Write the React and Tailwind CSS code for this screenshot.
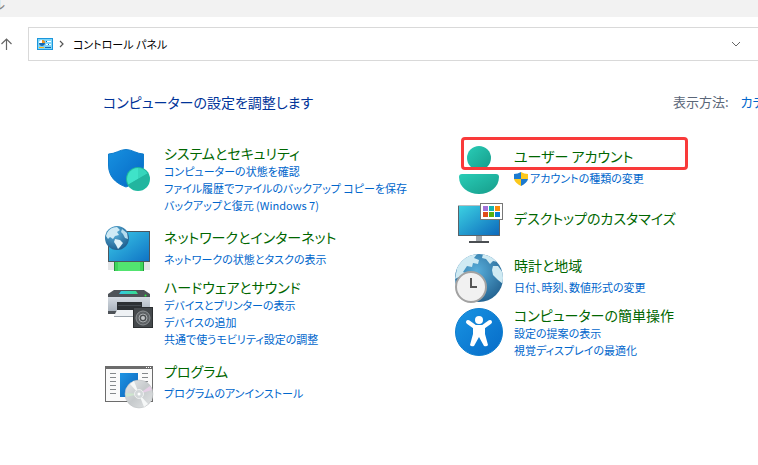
// App.jsx
import React from 'react';

const ShieldIcon = () => (
    <svg viewBox="0 0 48 44" className="w-12 h-11 shrink-0 overflow-visible" aria-hidden="true">
        <defs>
            <linearGradient id="shield" x1="0" y1="0" x2="1" y2="1">
                <stop offset="0" stopColor="#1791e0" />
                <stop offset="1" stopColor="#0567c4" />
            </linearGradient>
        </defs>
        <path
            d="M3.500 11C10 11 15 6.500 21 6.500S32 11 38.500 11V22C38.500 33 32 40 21 44C10 40 3.500 33 3.500 22Z"
            fill="url(#shield)"
            stroke="#0f7ccc"
        />
        <circle cx="33" cy="36" r="12" fill="#1fb89f" />
        <path d="M33 36V25A11 11 0 0 0 23.5 41.5Z" fill="#3fe3c9" />
        <path d="M33 36V25A11 11 0 0 1 42.5 30.5Z" fill="#35d6bc" />
        <path d="M33 36L42.5 30.5A11 11 0 0 1 23.5 41.5Z" fill="#22b59f" />
    </svg>
);

const NetworkIcon = () => (
    <svg viewBox="0 0 48 44" className="w-12 h-11 shrink-0 overflow-visible" aria-hidden="true">
        <defs>
            <linearGradient id="netScreen" x1="0" y1="0" x2="1" y2="1">
                <stop offset="0" stopColor="#3ccbe8" />
                <stop offset="1" stopColor="#0f72c4" />
            </linearGradient>
            <radialGradient id="netGlobe" cx="0.4" cy="0.3" r="0.75">
                <stop offset="0" stopColor="#5cb2dc" />
                <stop offset="1" stopColor="#1c5c8c" />
            </radialGradient>
        </defs>
        <rect x="3.5" y="4.5" width="41" height="30" fill="url(#netScreen)" stroke="#4c565e" />
        <rect x="3" y="35" width="42" height="8" fill="#e3e5e7" />
        <rect x="9" y="35" width="30" height="9" rx="1" fill="#3fd65c" />
        <rect x="13" y="35" width="22" height="9" fill="#52e470" />
        <path d="M9.500 35v9M38.500 35v9" stroke="#22963a" />
        <circle cx="12" cy="11" r="12" fill="url(#netGlobe)" />
        <path d="M2 6Q5 0 12 0L15 3L12 5L14 8L10 9L8 12L5 10L3 12L1 9Z" fill="#cfeaf5" />
        <path d="M10 12L15 13L18 16L15 20L13 22L11 18L9 15Z" fill="#dff1f8" />
        <path d="M17 2L22 6L23 12L20 11L18 7L16 5Z" fill="#b5dced" />
    </svg>
);

const HardwareIcon = () => (
    <svg viewBox="0 0 48 44" className="w-12 h-11 shrink-0 overflow-visible" aria-hidden="true">
        <defs>
            <linearGradient id="printerGlass" x1="0" y1="0" x2="1" y2="0">
                <stop offset="0" stopColor="#31c8e8" />
                <stop offset="1" stopColor="#38dd88" />
            </linearGradient>
            <linearGradient id="printerBody" x1="0" y1="0" x2="0" y2="1">
                <stop offset="0" stopColor="#d5dbe2" />
                <stop offset="1" stopColor="#aab3bd" />
            </linearGradient>
        </defs>
        <path d="M9 13H39L45 17V20H3V17Z" fill="#4e5358" />
        <path d="M16 14H31L33 17H14Z" fill="url(#printerGlass)" />
        <rect x="3" y="20" width="42" height="14" fill="url(#printerBody)" />
        <path d="M3 34H12V37H3Z" fill="#4e5358" />
        <path d="M12 25H37V33H12Z" fill="#2c3033" />
        <path d="M13 28.500H36" stroke="#454b50" />
        <path d="M12 33H36L38 39H9Z" fill="#eef1f4" />
        <path d="M9 39.500H30" stroke="#9aa2aa" />
        <circle cx="40.500" cy="18.500" r="1" fill="#2cf23c" />
        <rect x="28.500" y="30.500" width="19" height="20" fill="#45494c" stroke="#2b2e30" />
        <circle cx="38" cy="41" r="7" fill="#5e6265" stroke="#8d9194" />
        <circle cx="38" cy="41" r="4" fill="#4a4e51" stroke="#a9adaf" />
        <circle cx="38" cy="41" r="2" fill="#c2c5c7" />
    </svg>
);

const ProgramsIcon = () => (
    <svg viewBox="0 0 48 44" className="w-12 h-11 shrink-0 overflow-visible" aria-hidden="true">
        <defs>
            <linearGradient id="programBox" x1="0" y1="0" x2="1" y2="1">
                <stop offset="0" stopColor="#1c94e4" />
                <stop offset="1" stopColor="#0c62b8" />
            </linearGradient>
            <linearGradient id="disc" x1="0" y1="0" x2="1" y2="1">
                <stop offset="0" stopColor="#e8eaeb" />
                <stop offset="0.5" stopColor="#c6cacc" />
                <stop offset="1" stopColor="#e4e6e7" />
            </linearGradient>
        </defs>
        <rect x="0.500" y="5.500" width="47" height="35" fill="#fafafa" stroke="#6c6c6c" />
        <rect x="0" y="5" width="48" height="3" fill="#6c6c6c" />
        <path d="M41 6.500h1M43 6.500h1M45 6.500h1" stroke="#ffffff" />
        <path
            d="M5 12.500h6M5 16.500h6M5 20.500h6M5 24.500h6M5 28.500h6M5 32.500h6M37 12.500h6M37 16.500h6M37 20.500h6"
            stroke="#85898c"
        />
        <rect x="15" y="12" width="18" height="24" fill="url(#programBox)" />
        <circle cx="34" cy="33" r="14" fill="url(#disc)" stroke="#b9bdbf" strokeWidth="0.500" />
        <path d="M34 33L25 23L29 20Z" fill="#f6f8f8" />
        <path d="M34 33L43 43L39 46Z" fill="#f6f8f8" />
        <path d="M34 33L45 25L47 29Z" fill="#e6cfe6" />
        <path d="M34 33L21 36L21 32Z" fill="#cfe6cf" />
        <circle cx="34" cy="33" r="4.500" fill="#d3d7d9" stroke="#eef0f0" />
        <circle cx="34" cy="33" r="1.500" fill="#ffffff" />
    </svg>
);

const UserIcon = () => (
    <svg viewBox="0 0 48 44" className="w-12 h-11 shrink-0 overflow-visible" aria-hidden="true">
        <defs>
            <linearGradient id="user" x1="0" y1="0" x2="1" y2="1">
                <stop offset="0" stopColor="#29cdb7" />
                <stop offset="1" stopColor="#169c8a" />
            </linearGradient>
        </defs>
        <circle cx="24" cy="12" r="12" fill="url(#user)" />
        <path d="M7 28H41Q44 28 44 31C44 41 35 48 24 48S4 41 4 31Q4 28 7 28Z" fill="url(#user)" />
    </svg>
);

const DesktopIcon = () => (
    <svg viewBox="0 0 48 44" className="w-12 h-11 shrink-0 overflow-visible" aria-hidden="true">
        <defs>
            <linearGradient id="desktop" x1="0" y1="0" x2="1" y2="1">
                <stop offset="0" stopColor="#3cd2e2" />
                <stop offset="1" stopColor="#0c68bc" />
            </linearGradient>
        </defs>
        <rect x="21" y="27" width="6" height="6" fill="#a4a9ad" />
        <rect x="14" y="33" width="20" height="2" fill="#4a4e52" />
        <rect x="3.500" y="-2.500" width="41" height="30" fill="url(#desktop)" stroke="#5a6268" />
        <path d="M3 -2.500H45" stroke="#b9bdc0" />
        <rect x="25.500" y="-4.500" width="22" height="16" fill="#ffffff" stroke="#777777" />
        <path d="M28 -2h5v5h-5z" fill="#a070d8" />
        <path d="M34 -2h5v5h-5z" fill="#14b4b0" />
        <path d="M40 -2h5v5h-5z" fill="#f98b0c" />
        <path d="M28 4h5v5h-5z" fill="#e04a18" />
        <path d="M34 4h5v5h-5z" fill="#58b010" />
        <path d="M40 4h5v5h-5z" fill="#0a7cd8" />
    </svg>
);

const ClockIcon = () => (
    <svg viewBox="0 0 48 44" className="w-12 h-11 shrink-0 overflow-visible" aria-hidden="true">
        <defs>
            <radialGradient id="clockGlobe" cx="0.45" cy="0.35" r="0.7">
                <stop offset="0" stopColor="#58aedb" />
                <stop offset="1" stopColor="#215f8d" />
            </radialGradient>
            <clipPath id="clockClip">
                <circle cx="24" cy="23" r="24" />
            </clipPath>
        </defs>
        <circle cx="24" cy="23" r="24" fill="url(#clockGlobe)" />
        <g clipPath="url(#clockClip)" fill="#cfeaf3">
            <path d="M0 24L3 8L14 0L22 -1L19 3L24 5L23 9L18 8L17 12L12 11L8 17L12 19L6 21Z" />
            <path d="M28 -1L38 2L43 7L38 6L35 9L31 4L27 3Z" />
            <path d="M38 11L43 11L48 18V29L43 25L38 20L37 15Z" />
        </g>
        <circle cx="16" cy="32" r="15" fill="#f1f1f1" stroke="#a2a2a2" strokeWidth="2" />
        <path d="M16 23V32H22" fill="none" stroke="#555555" strokeWidth="2" />
    </svg>
);

const AccessIcon = () => (
    <svg viewBox="0 0 48 44" className="w-12 h-11 shrink-0 overflow-visible" aria-hidden="true">
        <defs>
            <linearGradient id="access" x1="0" y1="0" x2="1" y2="1">
                <stop offset="0" stopColor="#1994e2" />
                <stop offset="1" stopColor="#066bc8" />
            </linearGradient>
        </defs>
        <circle cx="24" cy="27" r="23.500" fill="url(#access)" stroke="#0f7fcf" />
        <circle cx="24" cy="15" r="4" fill="#ffffff" />
        <path
            d="M13 17L20 22H28L35 17M24 22V29"
            fill="none"
            stroke="#ffffff"
            strokeWidth="4"
            strokeLinecap="round"
            strokeLinejoin="round"
        />
        <path d="M18 21H30V29L33 40Q32 42 29 41L24 32L19 41Q16 42 15 40L18 29Z" fill="#ffffff" />
    </svg>
);

const UacShield = () => (
    <svg viewBox="0 0 14 14" className="w-3.5 h-3.5 shrink-0" aria-hidden="true">
        <path d="M7 0Q4 2 0 2V7H7Z" fill="#1c7ad0" />
        <path d="M7 0Q10 2 14 2V7H7Z" fill="#fbc81c" />
        <path d="M0 7H7V14Q1 11 0 7Z" fill="#fbc81c" />
        <path d="M14 7H7V14Q13 11 14 7Z" fill="#1c7ad0" />
    </svg>
);

const PanelIcon = () => (
    <svg viewBox="0 0 16 12" className="w-4 h-3 shrink-0" aria-hidden="true">
        <rect x="0.500" y="0.500" width="15" height="11" fill="#7fd6f8" stroke="#1b96dc" />
        <circle cx="5" cy="5" r="3" fill="#ffffff" />
        <path d="M5 5V2A3 3 0 1 1 2 5Z" fill="#1268b0" />
        <path d="M5 5V2A3 3 0 0 1 8 5Z" fill="#f4961c" />
        <path d="M9 6.500h2M10 3.500h4M12 6.500h2" stroke="#ffffff" />
        <path d="M9 3h1v1h-1zM11 6h1v1h-1z" fill="#0f5ca8" />
        <path d="M2 9.500h5" stroke="#f4b41c" />
        <path d="M8 9.500h6" stroke="#1268b0" />
    </svg>
);

const leftCategories = [
    {
        title: 'システムとセキュリティ',
        icon: ShieldIcon,
        height: 'min-h-[84px]',
        links: ['コンピューターの状態を確認', 'ファイル履歴でファイルのバックアップ コピーを保存', 'バックアップと復元 (Windows 7)'],
    },
    {
        title: 'ネットワークとインターネット',
        icon: NetworkIcon,
        height: 'min-h-[50px]',
        links: ['ネットワークの状態とタスクの表示'],
    },
    {
        title: 'ハードウェアとサウンド',
        icon: HardwareIcon,
        height: 'min-h-[84px]',
        links: ['デバイスとプリンターの表示', 'デバイスの追加', '共通で使うモビリティ設定の調整'],
    },
    {
        title: 'プログラム',
        icon: ProgramsIcon,
        height: 'min-h-[50px]',
        links: ['プログラムのアンインストール'],
    },
];

const rightCategories = [
    {
        title: 'ユーザー アカウント',
        icon: UserIcon,
        height: 'min-h-[62px]',
        links: ['アカウントの種類の変更'],
        shield: true,
        marked: true,
    },
    {
        title: 'デスクトップのカスタマイズ',
        icon: DesktopIcon,
        height: 'min-h-[47px]',
        links: [],
    },
    {
        title: '時計と地域',
        icon: ClockIcon,
        height: 'min-h-[50px]',
        links: ['日付、時刻、数値形式の変更'],
    },
    {
        title: 'コンピューターの簡単操作',
        icon: AccessIcon,
        height: 'min-h-[50px]',
        links: ['設定の提案の表示', '視覚ディスプレイの最適化'],
    },
];

const Category = ({ item }) => {
    const Icon = item.icon;
    return (
        <section className={`relative flex items-start gap-[11px] ${item.height}`}>
            <Icon />
            <div className="whitespace-nowrap">
                <h2 className="text-[14px] leading-5">
                    <a href="#" className="text-[#006600] hover:underline">{item.title}</a>
                </h2>
                <ul className={item.links.length === 1 ? 'mt-1' : ''}>
                    {item.links.map((link) => (
                        <li key={link} className="flex items-center gap-0.5 text-[11px] leading-[17px]">
                            {item.shield && <UacShield />}
                            <a href="#" className="text-[#0066cc] hover:underline">{link}</a>
                        </li>
                    ))}
                </ul>
            </div>
            {item.marked && (
                <div className="absolute left-[6px] -top-[9px] w-[227px] h-[33px] rounded-sm border-3 border-[#f93a3a] pointer-events-none" />
            )}
        </section>
    );
};

const App = () => {
    return (
        <div className="min-h-screen overflow-hidden bg-white text-black font-['Noto_Sans_CJK_JP',sans-serif] [font-feature-settings:'palt']">
            <header>
                <div className="flex h-[17px] items-end overflow-hidden bg-[#f2f2f2]">
                    <span className="-ml-2 mb-1.5 text-[14px] leading-4 text-[#888888]">ル</span>
                </div>
                <nav className="mt-[10px] flex items-center">
                    <button type="button" aria-label="上へ" className="w-7 shrink-0">
                        <svg viewBox="0 0 28 14" className="w-7 h-3.5" fill="none" stroke="#666666" aria-hidden="true">
                            <path d="M6.500 13V2M1.500 7L6.500 2L11.500 7" strokeWidth="1.200" />
                        </svg>
                    </button>
                    <div className="flex h-[34px] grow items-center border border-r-0 border-[#d9d9d9] pl-2 pr-[17px]">
                        <PanelIcon />
                        <svg viewBox="0 0 6 8" className="ml-1.5 w-1.5 h-2" fill="none" stroke="#555555" aria-hidden="true">
                            <path d="M1 1L4 4L1 7" strokeWidth="1.200" />
                        </svg>
                        <span className="ml-2 text-[11px] leading-5">コントロール パネル</span>
                        <button type="button" aria-label="以前の場所" className="ml-auto">
                            <svg viewBox="0 0 10 6" className="w-2.5 h-1.5" fill="none" stroke="#666666" aria-hidden="true">
                                <path d="M1 1L5 5L9 1" />
                            </svg>
                        </button>
                    </div>
                </nav>
            </header>

            <main>
                <div className="mt-[31px] flex items-center justify-between pl-[103px] whitespace-nowrap">
                    <h1 className="text-[14px] leading-5 text-[#003399]">コンピューターの設定を調整します</h1>
                    <div className="flex w-[85px] shrink-0 gap-3 overflow-hidden text-[13px] leading-5">
                        <span className="shrink-0 text-[#5a6678]">表示方法:</span>
                        <a href="#" className="text-[#0066cc]">カテゴリ</a>
                    </div>
                </div>
                <div className="mt-[31px] grid grid-cols-[350px_1fr] pl-[105px]">
                    <div>
                        {leftCategories.map((item) => (
                            <Category key={item.title} item={item} />
                        ))}
                    </div>
                    <div className="pt-[3px]">
                        {rightCategories.map((item) => (
                            <Category key={item.title} item={item} />
                        ))}
                    </div>
                </div>
            </main>
        </div>
    );
};

export default App;
